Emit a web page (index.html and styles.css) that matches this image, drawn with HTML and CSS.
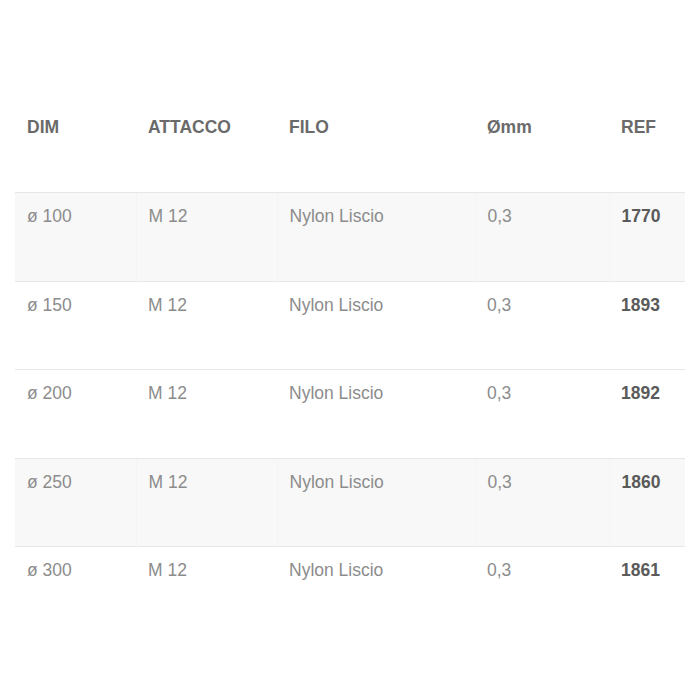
FILE: index.html
```html
<!DOCTYPE html>
<html>
<head>
<meta charset="utf-8">
<link rel="stylesheet" href="styles.css">
</head>
<body>
<div class="wrap">
<table class="spec">
  <colgroup>
    <col class="c1"><col class="c2"><col class="c3"><col class="c4"><col class="c5">
  </colgroup>
  <thead>
    <tr><th>DIM</th><th>ATTACCO</th><th>FILO</th><th>Ømm</th><th>REF</th></tr>
  </thead>
  <tbody>
    <tr class="shade"><td>ø 100</td><td>M 12</td><td>Nylon Liscio</td><td>0,3</td><td class="ref">1770</td></tr>
    <tr><td>ø 150</td><td>M 12</td><td>Nylon Liscio</td><td>0,3</td><td class="ref">1893</td></tr>
    <tr><td>ø 200</td><td>M 12</td><td>Nylon Liscio</td><td>0,3</td><td class="ref">1892</td></tr>
    <tr class="shade"><td>ø 250</td><td>M 12</td><td>Nylon Liscio</td><td>0,3</td><td class="ref">1860</td></tr>
    <tr><td>ø 300</td><td>M 12</td><td>Nylon Liscio</td><td>0,3</td><td class="ref">1861</td></tr>
  </tbody>
</table>
</div>
</body>
</html>
```

FILE: styles.css
```css
html, body {
  margin: 0;
  padding: 0;
  background: #ffffff;
}
body {
  font-family: "Liberation Sans", Arial, sans-serif;
  font-size: 17.5px;
  line-height: 24px;
  color: #8c8c8c;
}
.wrap {
  padding: 104px 15px 0 15px;
}
.spec {
  width: 670px;
  border-collapse: collapse;
  table-layout: fixed;
}
.c1 { width: 121px; }
.c2 { width: 141px; }
.c3 { width: 198px; }
.c4 { width: 134px; }
.c5 { width: 76px; }
.spec th {
  text-align: left;
  vertical-align: top;
  font-weight: bold;
  color: #6a6a6a;
  padding: 11px 12px 0 12px;
  height: 77px;
}
.spec td {
  vertical-align: top;
  padding: 11px 12px 0 12px;
  height: 76.5px;
  border-top: 1px solid #e6e6e6;
}
.spec tr.shade td {
  background: #f8f8f8;
  border-left: 1px solid #f4f4f4;
}
.spec tr.shade td:first-child {
  border-left: none;
}
.spec td.ref {
  font-weight: bold;
  color: #5a5a5a;
}
```
